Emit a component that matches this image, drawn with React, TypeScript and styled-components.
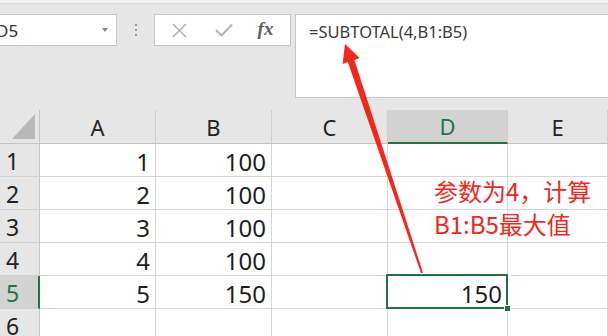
import React from "react";
import styled, { createGlobalStyle, css } from "styled-components";

const Global = createGlobalStyle`
  html, body { margin: 0; padding: 0; background: #e6e6e6; }
  body { width: 608px; height: 336px; overflow: hidden; font-family: "Noto Sans", "Liberation Sans", sans-serif; }
`;

const GREEN = "#217346";
const GRID = "#d6d6d6";

const Page = styled.div`
  position: relative;
  width: 608px;
  height: 336px;
  overflow: hidden;
  background: #e6e6e6;
`;

const TopEdge = styled.div`
  height: 3px;
  background: #f2f2f2;
  border-bottom: 1px solid #d9d9d9;
`;

const FormulaRow = styled.div`
  display: flex;
  align-items: flex-start;
  padding-top: 10px;
  height: 84px;
  & > * { flex-shrink: 0; }
`;

const NameBox = styled.div`
  box-sizing: border-box;
  width: 118px;
  height: 32px;
  margin-left: -1px;
  background: #fff;
  border: 1px solid #c6c6c6;
  display: flex;
  align-items: center;
  justify-content: space-between;
  padding-right: 8px;
  overflow: hidden;
  font-size: 17px;
  color: #333;
`;

const NameText = styled.span`
  margin-left: -4px;
`;

const DropArrow = styled.span`
  width: 0;
  height: 0;
  border-left: 3.5px solid transparent;
  border-right: 3.5px solid transparent;
  border-top: 4px solid #8a8a8a;
`;

const Grip = styled.div`
  width: 37px;
  height: 32px;
  display: flex;
  flex-direction: column;
  align-items: center;
  justify-content: center;
  gap: 3px;
`;

const GripDot = styled.span`
  width: 2px;
  height: 2px;
  background: #9a9a9a;
`;

const FuncButtons = styled.div`
  box-sizing: border-box;
  width: 137px;
  height: 32px;
  background: #fff;
  border: 1px solid #c6c6c6;
  display: grid;
  grid-template-columns: 44px 46px 1fr;
  align-items: center;
  justify-items: center;
  padding-left: 2px;
`;

const Fx = styled.span`
  font-family: "Liberation Serif", serif;
  font-style: italic;
  font-weight: bold;
  font-size: 19px;
  color: #5f5f5f;
  margin-left: -6px;
  margin-top: -3px;
`;

const FormulaBar = styled.div`
  box-sizing: border-box;
  margin-left: 4px;
  width: 330px;
  height: 84px;
  background: #fff;
  border: 1px solid #c6c6c6;
  border-right: none;
  padding: 5px 0 0 13px;
  font-size: 16.5px;
  color: #3a3a3a;
`;

const Sheet = styled.div`
  margin-top: 12px;
  display: grid;
  grid-template-columns: 40px 116px 116px 116px 120px 1fr;
  grid-template-rows: 34px repeat(6, 33px);
`;

const Corner = styled.div`
  box-sizing: border-box;
  background: #e6e6e6;
  border-right: 1px solid #c4c4c4;
  border-bottom: 1px solid #c4c4c4;
  display: flex;
  align-items: flex-end;
  justify-content: flex-end;
  padding: 0 4px 4px 0;
`;

const CornerTri = styled.span`
  width: 0;
  height: 0;
  border-left: 23px solid transparent;
  border-bottom: 25px solid #b8b8b8;
`;

const ColHead = styled.div<{ $active?: boolean }>`
  box-sizing: border-box;
  background: #e6e6e6;
  border-right: 1px solid #cdcdcd;
  border-bottom: 1px solid #c4c4c4;
  display: flex;
  align-items: center;
  justify-content: center;
  font-size: 22px;
  color: #222;
  ${(p) =>
    p.$active &&
    css`
      background: #d3d3d3;
      color: ${GREEN};
      border-bottom: 2px solid ${GREEN};
    `}
`;

const RowHead = styled.div<{ $active?: boolean }>`
  box-sizing: border-box;
  background: #e6e6e6;
  border-right: 1px solid #c4c4c4;
  border-bottom: 1px solid #d0d0d0;
  padding: 2px 0 0 6px;
  line-height: 31px;
  font-size: 23px;
  color: #222;
  ${(p) =>
    p.$active &&
    css`
      background: #d3d3d3;
      color: ${GREEN};
      border-right: 2px solid ${GREEN};
    `}
`;

const Cell = styled.div<{ $selected?: boolean }>`
  position: relative;
  box-sizing: border-box;
  background: #fff;
  border-right: 1px solid ${GRID};
  border-bottom: 1px solid ${GRID};
  padding: 2px 5px 0 0;
  line-height: 31px;
  text-align: right;
  font-size: 24px;
  color: #1e1e1e;
  ${(p) =>
    p.$selected &&
    css`
      &::after {
        content: "";
        position: absolute;
        top: -2px;
        left: -2px;
        right: -1px;
        bottom: -1px;
        border: 2px solid ${GREEN};
        pointer-events: none;
      }
    `}
`;

const FillHandle = styled.span`
  position: absolute;
  right: -3px;
  bottom: -3px;
  width: 5px;
  height: 5px;
  background: ${GREEN};
  box-shadow: 0 0 0 1px #fff;
  z-index: 2;
`;

const Note = styled.div`
  position: absolute;
  left: 434px;
  top: 174px;
  font-family: "Noto Sans CJK SC", sans-serif;
  font-size: 24px;
  line-height: 33px;
  color: #f5261b;
  white-space: nowrap;
`;

const ArrowSvg = styled.svg`
  position: absolute;
  left: 0;
  top: 0;
  pointer-events: none;
`;

const cols = ["A", "B", "C", "D", "E"];
const data: Array<[string, string]> = [
  ["1", "100"],
  ["2", "100"],
  ["3", "100"],
  ["4", "100"],
  ["5", "150"],
  ["", ""],
];

export default function App() {
  return (
    <Page>
      <Global />
      <TopEdge />
      <FormulaRow>
        <NameBox>
          <NameText>D5</NameText>
          <DropArrow />
        </NameBox>
        <Grip>
          <GripDot />
          <GripDot />
          <GripDot />
        </Grip>
        <FuncButtons>
          <svg width="15" height="15" viewBox="0 0 15 15">
            <path d="M1 1 L14 14 M14 1 L1 14" stroke="#b3b3b3" strokeWidth="1.6" fill="none" />
          </svg>
          <svg width="18" height="14" viewBox="0 0 18 14">
            <path d="M1 7 L6.5 12.5 L17 1.5" stroke="#b3b3b3" strokeWidth="2" fill="none" />
          </svg>
          <Fx>fx</Fx>
        </FuncButtons>
        <FormulaBar>=SUBTOTAL(4,B1:B5)</FormulaBar>
      </FormulaRow>
      <Sheet>
        <Corner>
          <CornerTri />
        </Corner>
        {cols.map((c) => (
          <ColHead key={c} $active={c === "D"}>
            {c}
          </ColHead>
        ))}
        {data.map(([a, b], i) => (
          <React.Fragment key={i}>
            <RowHead $active={i === 4}>{i + 1}</RowHead>
            <Cell>{a}</Cell>
            <Cell>{b}</Cell>
            <Cell />
            <Cell $selected={i === 4}>
              {i === 4 ? "150" : ""}
              {i === 4 && <FillHandle />}
            </Cell>
            <Cell />
          </React.Fragment>
        ))}
      </Sheet>
      <Note>
        参数为4，计算
        <br />
        B1:B5最大值
      </Note>
      <ArrowSvg width="608" height="336" viewBox="0 0 608 336">
        <polygon
          points="345,44 359.6,58.1 354.4,59.9 422.95,272.7 421.05,273.3 347.8,62.1 342.6,63.9"
          fill="#f5261b"
        />
      </ArrowSvg>
    </Page>
  );
}
